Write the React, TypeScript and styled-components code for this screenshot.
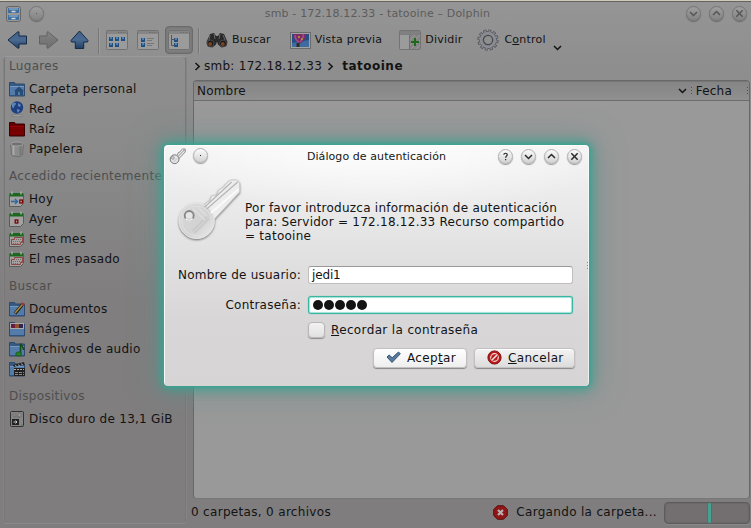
import React from "react";
import styled, { createGlobalStyle, css } from "styled-components";

const GlobalStyle = createGlobalStyle`
  html, body { margin: 0; padding: 0; overflow: hidden; }
  svg { display: block; flex: none; }
`;

const Window = styled.div`
  position: relative;
  box-sizing: border-box;
  width: 751px;
  height: 528px;
  display: flex;
  flex-direction: column;
  overflow: hidden;
  border-top: 1px solid #cdcaba;
  background: linear-gradient(#959595 0, #8e8e8e 70px, #8b8b8b 140px, #807e7f 300px, #7f7d7e 100%);
  box-shadow: inset 0 1px 0 #646464;
  font-family: "DejaVu Sans", sans-serif;
  font-size: 12px;
  letter-spacing: 0.23px;
  color: #131313;
  white-space: nowrap;
`;

const TitleBar = styled.header`
  display: flex;
  align-items: center;
  height: 25px;
  padding: 0 4px 0 6px;
  font-size: 11px;
`;

const WindowTitle = styled.span<{ $dim?: boolean }>`
  flex: 1;
  padding-left: ${(p) => (p.$dim ? 25 : 47)}px;
  text-align: center;
  color: ${(p) => (p.$dim ? "#5c5c5c" : "#161616")};
  letter-spacing: ${(p) => (p.$dim ? "0.16px" : "0.08px")};
`;

const TitleButtons = styled.div<{ $gap: number }>`
  display: flex;
  gap: ${(p) => p.$gap}px;
`;

const RoundButton = styled.button<{ $dim?: boolean }>`
  box-sizing: border-box;
  display: grid;
  place-items: center;
  width: 15px;
  height: 15px;
  padding: 0;
  border-radius: 50%;
  border: 1px solid ${(p) => (p.$dim ? "#757575" : "#b0b0b0")};
  color: ${(p) => (p.$dim ? "#555" : "#2b2b2b")};
  background: ${(p) => (p.$dim ? "linear-gradient(#9e9e9e, #848484)" : "linear-gradient(#fbfbfb, #d2d2d2)")};
  box-shadow: 0 1px 1px ${(p) => (p.$dim ? "#686868" : "#999")};
`;

const ToolBar = styled.nav`
  display: flex;
  align-items: center;
  height: 29px;
  padding-left: 7px;
  font-size: 11px;
  letter-spacing: 0.21px;
`;

const Tool = styled.div<{ $before?: number; $gap?: number }>`
  display: flex;
  align-items: center;
  gap: ${(p) => p.$gap ?? 4}px;
  margin-left: ${(p) => p.$before ?? 0}px;
  margin-top: -1px;
`;

const ToolLabel = styled.span`
  padding-bottom: 1px;
`;

const MenuArrow = styled.span`
  align-self: flex-end;
  margin: 0 0 3px 7px;
`;

const PressedTool = styled.div`
  box-sizing: border-box;
  display: grid;
  place-items: center;
  width: 28px;
  height: 28px;
  margin: -2px 0 0 6px;
  border: 1px solid #6b6b6b;
  border-radius: 4px;
  background: #7f7f7f;
  box-shadow: inset 0 0 2px #666;
`;

const Separator = styled.i<{ $before: number }>`
  width: 1px;
  height: 26px;
  margin-left: ${(p) => p.$before}px;
  background: #777;
  box-shadow: 1px 0 #9c9c9c;
`;

const Body = styled.div`
  display: flex;
  flex: 1;
  min-height: 0;
`;

const Sidebar = styled.aside`
  box-sizing: border-box;
  width: 184px;
  height: 468px;
  margin: 1px 0 0 3px;
  padding-left: 5px;
  border: 1px solid #858585;
  border-color: #9a9a9a #858383 #8b8989 #858383;
  border-radius: 4px;
  box-shadow: inset 1px 0 #777, inset -1px 0 #797979;
`;

const PlaceHeading = styled.h2<{ $first?: boolean }>`
  box-sizing: border-box;
  height: ${(p) => (p.$first ? 22 : 30)}px;
  margin: 0;
  padding-top: ${(p) => (p.$first ? 0 : 4)}px;
  line-height: ${(p) => (p.$first ? 18 : 26)}px;
  font-size: 12px;
  font-weight: normal;
  letter-spacing: 0.32px;
  color: #4e4e4e;
`;

const Place = styled.div`
  display: flex;
  align-items: center;
  gap: 4px;
  height: 20px;
  letter-spacing: 0.27px;
`;

const Main = styled.main`
  display: flex;
  flex-direction: column;
  width: 557px;
  margin-left: 6px;
`;

const Breadcrumb = styled.div`
  display: flex;
  align-items: center;
  height: 22px;
  padding-bottom: 2px;
  gap: 4px;
  letter-spacing: 0.27px;
`;

const Crumb = styled.span<{ $current?: boolean }>`
  margin-left: ${(p) => (p.$current ? 3 : -2)}px;
  font-weight: ${(p) => (p.$current ? "bold" : "normal")};
  ${(p) => p.$current && css`letter-spacing: 0.5px;`}
`;

const ListView = styled.section`
  box-sizing: border-box;
  width: 557px;
  height: 419px;
  margin-top: 1px;
  border: 1px solid #686868;
  border-bottom-color: #777;
  border-radius: 4px;
  background: #999;
  overflow: hidden;
`;

const ColumnHeader = styled.div`
  box-sizing: border-box;
  display: flex;
  align-items: center;
  height: 20px;
  padding: 0 1px 0 3px;
  border-bottom: 1px solid #6d6d6d;
  background: linear-gradient(#858585, #8f8f8f);
  box-shadow: inset 0 1px #767676;
`;

const ColumnName = styled.span`
  flex: 1;
  letter-spacing: 0.2px;
`;

const Dots = styled.i<{ $before: number; $after?: number }>`
  width: 1px;
  height: 8px;
  margin: 0 ${(p) => p.$after ?? 0}px 0 ${(p) => p.$before}px;
  background: repeating-linear-gradient(#4e4e4e 0 1px, transparent 1px 3px);
`;

const StatusBar = styled.footer`
  display: flex;
  align-items: center;
  height: 27px;
`;

const StatusText = styled.span<{ $grow?: boolean }>`
  ${(p) => p.$grow && css`flex: 1;`}
  margin-left: ${(p) => (p.$grow ? -2 : 8)}px;
  padding-bottom: 2px;
  letter-spacing: 0.32px;
`;

const Progress = styled.div`
  box-sizing: border-box;
  display: grid;
  place-items: center;
  width: 86px;
  height: 22px;
  margin: 0 0 0 7px;
  padding-left: 5px;
  border: 1px solid #5d5b5b;
  border-radius: 4px;
  background: #736f70;
  box-shadow: 0 1px #8b8989, inset 0 0 2px #5c5a5a;
`;

const ProgressPill = styled.i`
  width: 3px;
  height: 20px;
  border: solid #357d71;
  border-width: 0 1px;
  border-radius: 2px;
  background: #45a394;
`;

const Dialog = styled.section`
  position: absolute;
  left: 164px;
  top: 144px;
  box-sizing: border-box;
  width: 425px;
  height: 241px;
  display: flex;
  flex-direction: column;
  border-radius: 4px;
  background:
    radial-gradient(ellipse 250px 70px at 50% 0, #fffffff0, #ffffff00),
    linear-gradient(#f3f3f3 0, #e8e8e8 70px, #d8d6d7 175px, #d6d4d5 100%);
  box-shadow: inset 1px 1px #ffffffd0, inset -1px 0 #ffffffa0,
    0 0 3px 1px #38a594, 0 0 11px 3px #3ba292, 0 0 28px 6px #5c8f8788;
`;

const DialogTitleBar = styled(TitleBar)`
  height: 23px;
  padding: 0 7px 0 5px;
`;

const Message = styled.div`
  display: flex;
  height: 86px;
  padding: 0 0 0 13px;
`;

const KeyPicture = styled.div`
  width: 65px;
  padding-top: 11px;
`;

const MessageText = styled.p`
  margin: 33px 0 0 3px;
  line-height: 14px;
  letter-spacing: 0.25px;
`;

const Form = styled.div`
  display: grid;
  grid-template-columns: 137px 265px;
  column-gap: 7px;
  grid-template-rows: 20px 20px;
  row-gap: 10px;
  align-items: center;
  margin-top: 11px;
`;

const FieldLabel = styled.label`
  text-align: right;
  line-height: 18px;
`;

const Field = styled.div<{ $focused?: boolean }>`
  box-sizing: border-box;
  display: flex;
  align-items: center;
  gap: 1px;
  height: 18px;
  padding-left: 3px;
  letter-spacing: -0.15px;
  border: 1px solid #c0bebf;
  border-top-color: #9a9899;
  border-radius: 3px;
  background: #fff;
  ${(p) => p.$focused && css`
    border: 1px solid #39b5a2;
    padding-left: 4px;
    box-shadow: inset 0 0 1px 1px #9fe0d6, 0 0 1px #39b5a2;
  `}
`;

const Bullet = styled.i`
  width: 10px;
  height: 10px;
  border-radius: 50%;
  background: #131313;
`;

const RememberRow = styled.div`
  display: flex;
  align-items: center;
  gap: 6px;
  height: 20px;
  margin: 5px 0 0 144px;
  letter-spacing: 0.36px;
`;

const CheckBox = styled.i`
  box-sizing: border-box;
  width: 17px;
  height: 16px;
  border: 1px solid #b9b7b8;
  border-radius: 4px;
  background: linear-gradient(#f2f2f2, #e2e1e1);
  box-shadow: 0 1px 1px #8d8b8c;
`;

const ButtonRow = styled.div`
  display: flex;
  justify-content: flex-end;
  gap: 7px;
  margin-top: 8px;
  padding-right: 14px;
`;

const PushButton = styled.button<{ $width: number; $primary?: boolean }>`
  box-sizing: border-box;
  display: flex;
  align-items: center;
  gap: 6px;
  width: ${(p) => p.$width}px;
  height: 20px;
  padding: 0 0 1px ${(p) => (p.$primary ? 12 : 12)}px;
  border: 1px solid #c2c0c1;
  border-radius: 4px;
  background: ${(p) => (p.$primary ? "linear-gradient(#fff, #eee)" : "linear-gradient(#f3f3f3, #dddcdc)")};
  box-shadow: 0 1px 1px #878586, inset 0 1px #fff;
  font: inherit;
  letter-spacing: 0.33px;
  color: #131313;
`;

const Glyph = ({ kind }: { kind: "down" | "up" | "close" | "right" | "dot" | "help" }) => {
  const paths = {
    down: "M1 3l3.5 3.5L8 3",
    up: "M1 6l3.5-3.5L8 6",
    close: "M1.3 1.3l6.4 6.4M7.7 1.3L1.3 7.7",
    right: "M2.5 1l3.7 3.5L2.5 8",
    dot: "M4 4.5h1",
    help: "M2.8 2.8C3 .6 6.4.8 6.2 2.9 6.1 4.1 4.6 4.2 4.6 5.8M4.6 7v1.2",
  };
  return (
    <svg width={9} height={9} viewBox="0 0 9 9" fill="none" stroke="currentColor">
      <path d={paths[kind]} strokeWidth={kind === "dot" ? 1 : kind === "help" ? 1.2 : 1.5} />
    </svg>
  );
};

const Cabinet = () => (
  <svg width="15" height="16" viewBox="0 0 15 16">
    <rect x=".5" y=".5" width="14" height="15" rx="2" fill="#989898" stroke="#666" />
    <rect x="2" y="2" width="11" height="5" fill="#3f6f9f" />
    <rect x="2" y="9" width="11" height="5" fill="#3f6f9f" />
    <path d="M3 3h9M3 10h9" stroke="#a4bdd0" />
    <path d="M5.5 5.5h4M5.5 12.5h4" stroke="#d1d7da" strokeWidth="1.5" />
  </svg>
);

const Arrow = ({ dir, gray }: { dir: "left" | "right" | "up"; gray?: boolean }) => {
  const shapes = {
    left: "M1 10L11 1.7l1 .4V6h7.5v8H12v3.9l-1 .4z",
    right: "M20 10L10 1.7l-1 .4V6H1.5v8H9v3.9l1 .4z",
    up: "M10.5 1L19 10.5l-.5 1.5h-3.8v6.5H6.3V12H2.5L2 10.5z",
  };
  const id = `arrow-${dir}`;
  return (
    <svg width="21" height="20" viewBox="0 0 21 20">
      <defs>
        <linearGradient id={id} x1="0" x2="0" y1="0" y2="1">
          <stop stopColor={gray ? "#858585" : "#3f5f87"} />
          <stop offset=".5" stopColor={gray ? "#787878" : "#4a6a92"} />
          <stop offset="1" stopColor={gray ? "#6f6f6f" : "#213f65"} />
        </linearGradient>
      </defs>
      <path d={shapes[dir]} fill={`url(#${id})`} stroke={gray ? "#626262" : "#172943"} strokeLinejoin="round" />
    </svg>
  );
};

const ViewIcon = ({ kind }: { kind: "icons" | "details" | "tree" }) => {
  const squares = {
    icons: [[4, 7], [10, 7], [16, 7], [4, 13], [10, 13]],
    details: [[5, 8], [5, 13]],
    tree: [[7, 8], [7, 13]],
  }[kind];
  return (
    <svg width="22" height="20" viewBox="0 0 22 20">
      <rect x=".5" y=".5" width="21" height="19" rx="1" fill="#9b9b9b" stroke="#717171" />
      <path d="M1 2.5h20" stroke="#858585" strokeWidth="3" />
      <path d="M12 2.5h8" stroke="#6f6f6f" strokeDasharray="1.5 1" />
      {squares.map(([x, y]) => (
        <g key={`${x}-${y}`}>
          <rect x={x - 1} y={y} width="4" height="4" fill="#204f80" />
          <rect x={x} y={y} width="2" height="2" fill="#4b83b8" />
        </g>
      ))}
      {kind === "details" && <path d="M10 8.5h7M10 10.5h5M10 13.5h7M10 15.5h5" stroke="#777" />}
      {kind === "tree" && <path d="M3.5 5v10.5h3M3.5 9.5h3" stroke="#555" fill="none" />}
    </svg>
  );
};

const Binoculars = () => (
  <svg width="22" height="16" viewBox="0 0 22 16">
    <path d="M4 2l4-1 2 3h2l2-3 4 1 3.5 8-1 4-5 1.5-3.5-3-1-3-1 3-3.5 3-5-1.5-1-4z" fill="#292929" />
    <path d="M4 3l-1 5M8 2l1 5M14 2l-1 5M17 3l2 5" stroke="#666" fill="none" />
    <circle cx="4.5" cy="11.5" r="3.4" fill="#171717" stroke="#4b4b4b" />
    <circle cx="17" cy="11.5" r="3.4" fill="#171717" stroke="#4b4b4b" />
    <circle cx="4.2" cy="12" r="2" fill="#7a4222" />
    <circle cx="16.8" cy="12" r="2" fill="#7a4222" />
  </svg>
);

const Preview = () => (
  <svg width="21" height="17" viewBox="0 0 21 17">
    <rect x=".5" y=".5" width="20" height="16" fill="#a3a3a3" stroke="#6b6b6b" />
    <rect x="2" y="2" width="17" height="13" fill="#244d88" />
    <path d="M2 11l17-3v7H2z" fill="#3c6ca0" />
    <path d="M4 2h12c1 4-2 7-6 9.5C6 10 3 6 4 2z" fill="#7c2b67" />
    <path d="M5 3c0 3 2 6 4 7M13 2c1 3-1 6-3 8" stroke="#a04f80" strokeWidth="1.5" fill="none" />
    <path d="M8 4h2v2H8zM11 6h2v2h-2z" fill="#a9853c" />
    <path d="M6.5 11h3v4h-3z" fill="#302b25" />
  </svg>
);

const Split = () => (
  <svg width="22" height="20" viewBox="0 0 22 20">
    <rect x=".5" y=".5" width="21" height="19" rx="1" fill="#9b9b9b" stroke="#747474" />
    <path d="M1 3h20" stroke="#7e7e7e" strokeWidth="4" />
    <path d="M2 3h18" stroke="#888" strokeDasharray="1 1" />
    <rect x="11" y="5" width="10" height="14" fill="#858585" />
    <path d="M11 10l5-5M11 15L21 5M12 19l9-9M17 19l4-4" stroke="#999" />
    <path d="M10.5 5v14" stroke="#6f6f6f" />
    <path d="M16 8v8M12 12h8" stroke="#1f691b" strokeWidth="2" />
  </svg>
);

const Gear = () => (
  <svg width="22" height="22" viewBox="0 0 22 22">
    <circle cx="11" cy="11" r="9.2" fill="none" stroke="#4b4c52" strokeWidth="2.8" strokeDasharray="2.9 1.917" />
    <circle cx="11" cy="11" r="7.2" fill="#8f8f8f" stroke="#55565d" strokeWidth="3.6" />
    <circle cx="11" cy="11" r="9" fill="none" stroke="#85868c" strokeWidth="2" strokeDasharray="1.8 2.912" strokeDashoffset="-.5" />
    <circle cx="11" cy="11" r="6.8" fill="none" stroke="#8b8c92" strokeWidth="3" />
    <circle cx="11" cy="11" r="4.6" fill="#8f8f8f" stroke="#484950" strokeWidth="1.2" />
  </svg>
);

const FolderBase = ({ red }: { red?: boolean }) => (
  <>
    <path d="M.5 1.5h5l1 1.5h9v12H.5z" fill={red ? "#650000" : "#365a84"} stroke={red ? "#3b0000" : "#2f4a6d"} />
    <path d="M1 6h14v8H1z" fill={red ? "#790000" : "#547caa"} />
    <path d="M1 5.5h14" stroke={red ? "#980505" : "#7599bd"} />
  </>
);

type PlaceKind = "home" | "net" | "root" | "trash" | "today" | "day" | "month" | "docs" | "pics" | "audio" | "video" | "disk";

const PlaceIcon = ({ kind }: { kind: PlaceKind }) => (
  <svg width="16" height="16" viewBox="0 0 16 16">
    {["home", "docs", "pics", "audio", "video"].includes(kind) && <FolderBase />}
    {kind === "home" && <path d="M5 10l5-4.5L15 10h-1v4h-3v-3H9v3H6v-4z" fill="#284c76" />}
    {kind === "root" && <FolderBase red />}
    {kind === "docs" && (
      <>
        <path d="M6 12.5L14 3" stroke="#242018" strokeWidth="3.4" />
        <path d="M6 12L13.5 3.5" stroke="#a88b32" strokeWidth="1.6" />
        <path d="M13 4l1.7-2" stroke="#a33d35" strokeWidth="3" />
      </>
    )}
    {kind === "pics" && (
      <>
        <path d="M1 2h14v6H1z" fill="#aaa" />
        <path d="M2 3h4v4H2z" fill="#6c1942" />
        <path d="M6 3h4v4H6z" fill="#8a532c" />
        <path d="M10 3h4v4h-4z" fill="#332451" />
      </>
    )}
    {kind === "audio" && (
      <>
        <path d="M11.5 13V2.5c1 3 3 2.5 3 6.5" stroke="#164d18" fill="none" strokeWidth="1.6" />
        <ellipse cx="9.6" cy="13" rx="2.9" ry="2.1" fill="#258225" stroke="#164d18" strokeWidth=".7" />
      </>
    )}
    {kind === "video" && (
      <>
        <path d="M5 7h11v8H5z" fill="#202020" />
        <path d="M4 4l11-3 .5 2.5L5 6z" fill="#252525" />
        <path d="M6 4.5l2 1M9 3.7l2 1M12 2.8l2 1M5 8.5h10" stroke="#aaa" strokeDasharray="2 1" />
        <path d="M6 11.5h9M6 13.5h9" stroke="#888" strokeDasharray="3 1" />
      </>
    )}
    {kind === "net" && (
      <>
        <ellipse cx="8" cy="14.7" rx="6" ry="1" fill="#a5a5a5" stroke="#666" strokeWidth=".5" />
        <circle cx="8" cy="6.5" r="6.2" fill="#203f80" />
        <path d="M3 3c2-2 4-1 4 0s-2 1-2 3-2 1-2-1zM9 2l3 2-1 2-2-1zM8 8l3 1-2 3-1-2z" fill="#5b88b8" />
      </>
    )}
    {kind === "trash" && (
      <>
        <path d="M1.5 3l1 11c1 2 10 2 11 0l1-11z" fill="#8b8b8b" stroke="#707070" />
        <path d="M4.5 5v9" stroke="#a8a8a8" strokeWidth="2" />
        <path d="M11.5 5v9" stroke="#777" strokeWidth="2" />
        <ellipse cx="8" cy="3" rx="6.2" ry="2" fill="#707070" stroke="#a2a2a2" />
      </>
    )}
    {(kind === "today" || kind === "day" || kind === "month") && (
      <>
        <path d="M.5 3h14v9.5l-3 3H.5z" fill="#a1a1a1" stroke="#5b5b5b" />
        <path d="M1 2h13v3.5H1z" fill="#1e6720" />
        <path d="M3 .5v3M12 .5v3" stroke="#a9b3a9" strokeWidth="1.4" />
      </>
    )}
    {kind === "today" && (
      <>
        <path d="M2 10.5h6M6 8l2.5 2.5L6 13" stroke="#2b66a4" fill="none" strokeWidth="1.3" />
        <rect x="10.8" y="9" width="2.6" height="3" fill="#aaa" stroke="#760000" strokeWidth="1.2" />
      </>
    )}
    {kind === "day" && <rect x="6.2" y="9" width="2.6" height="3" fill="#aaa" stroke="#760000" strokeWidth="1.3" />}
    {kind === "month" && (
      <>
        <path d="M5.5 6.5h8v5h-2v2h-9v-5h3z" fill="#a4a0a0" stroke="#8e3c3c" strokeWidth=".9" />
        <path d="M7 8.5h6M4 10.5h9M4 12.5h6" stroke="#776b6b" strokeDasharray="1 1" />
      </>
    )}
    {kind === "disk" && (
      <>
        <rect x="1.5" y=".5" width="13" height="15" rx="1" fill="#858585" stroke="#333" />
        <path d="M4 3h3v2H4zM9 2h3v4H9zM4 6h7" fill="#999" stroke="#6c6c6c" strokeWidth=".8" />
        <rect x="3" y="8" width="7" height="6" fill="#222" />
        <path d="M4.5 11h3M6.5 9.5L8 11l-1.5 1.5" stroke="#ccc" fill="none" />
        <path d="M12 14h1.5" stroke="#248524" />
      </>
    )}
  </svg>
);

const SmallKey = () => (
  <svg width="17" height="17" viewBox="0 0 17 17">
    <path d="M7.2 7.8l1.6-1.6.3-1.4 1.7-.7 1-1.5L13.6 1h2.6v3l-6.7 7z" fill="#ededed" stroke="#808080" strokeWidth=".9" />
    <path d="M9 8.5L15.3 2" stroke="#777" strokeWidth=".8" />
    <circle cx="5.6" cy="11.2" r="4.4" fill="#e4e4e4" stroke="#777" />
    <circle cx="3.9" cy="9.9" r="1.3" fill="#fafafa" stroke="#777" strokeWidth=".8" />
    <path d="M5 13.5l3-3" stroke="#bbb" />
  </svg>
);

const Key = () => (
  <svg width="65" height="66" viewBox="-.7 0 65 66">
    <defs>
      <linearGradient id="key-bow" x1="0" y1="0" x2="1" y2="1">
        <stop stopColor="#d9d9d9" />
        <stop offset=".6" stopColor="#d2d2d2" />
        <stop offset="1" stopColor="#efefef" />
      </linearGradient>
      <filter id="key-shade" x="-10%" y="-10%" width="125%" height="125%">
        <feDropShadow dx="0" dy="1" stdDeviation="1" floodColor="#444" floodOpacity=".75" />
      </filter>
    </defs>
    <g filter="url(#key-shade)">
      <path d="M26 28l2-4 4-2 2-5 5-1 2-5 5-3 3-4 4-3h6l3 3v9L33 44z" fill="#ededed" stroke="#bbb" strokeWidth=".6" />
      <circle cx="19" cy="42" r="17.5" fill="url(#key-bow)" stroke="#e8e8e8" />
    </g>
    <path d="M27 28L54 3M29 30L60 3" stroke="#b4b4b4" strokeWidth="1.1" />
    <path d="M33 34L61 10" stroke="#fafafa" strokeWidth="2" />
    <circle cx="19" cy="42" r="15" fill="none" stroke="#e2e2e2" strokeWidth="1" />
    <path d="M15 52l14-14M17 54l14-14" stroke="#c8c8c8" strokeWidth="1.6" />
    <path d="M15 29l12 12M19 27l10 10" stroke="#dedede" strokeWidth="1.5" />
    <circle cx="11.5" cy="36.5" r="4.5" fill="#e5e5e5" stroke="#858585" strokeWidth="1.8" />
    <path d="M8 39.5a4.5 4.5 0 0 0 7 0" fill="none" stroke="#f4f4f4" strokeWidth="1.5" />
  </svg>
);

const CheckIcon = () => (
  <svg width="15" height="13" viewBox="0 0 15 13">
    <path d="M1 6l2.2-2 3 2.8L12.5 1l1.8 1.8L6 11.5z" fill="#5a7ba0" stroke="#34506f" />
  </svg>
);

const CancelIcon = () => (
  <svg width="15" height="15" viewBox="0 0 15 15">
    <circle cx="7.5" cy="7.5" r="6.6" fill="#bd1818" stroke="#831212" />
    <circle cx="7.5" cy="7.5" r="3.8" fill="#c01f1f" stroke="#f0dede" strokeWidth="1.2" />
    <path d="M4.8 10.2l5.4-5.4" stroke="#b01515" strokeWidth="3.2" />
    <path d="M4.8 10.2l5.4-5.4" stroke="#f2e6e6" strokeWidth="1.6" />
  </svg>
);

const StopIcon = () => (
  <svg width="15" height="15" viewBox="0 0 15 15">
    <path d="M4.5.7h6l3.8 3.8v6l-3.8 3.8h-6L.7 10.5v-6z" fill="#8d1616" stroke="#5e1010" />
    <path d="M5 5l5 5M10 5l-5 5" stroke="#b9b1b1" strokeWidth="2.2" />
  </svg>
);

const groups: { title: string; places: [PlaceKind, string][] }[] = [
  { title: "Lugares", places: [["home", "Carpeta personal"], ["net", "Red"], ["root", "Raíz"], ["trash", "Papelera"]] },
  { title: "Accedido recientemente", places: [["today", "Hoy"], ["day", "Ayer"], ["month", "Este mes"], ["month", "El mes pasado"]] },
  { title: "Buscar", places: [["docs", "Documentos"], ["pics", "Imágenes"], ["audio", "Archivos de audio"], ["video", "Vídeos"]] },
  { title: "Dispositivos", places: [["disk", "Disco duro de 13,1 GiB"]] },
];

const ResizeGrip = styled.i`
  position: absolute;
  right: 1px;
  top: 117px;
  width: 1px;
  height: 7px;
  background: repeating-linear-gradient(#888 0 1px, transparent 1px 3px);
`;

const AuthDialog = () => (
  <Dialog role="dialog">
    <DialogTitleBar as="div">
      <TitleButtons $gap={7}>
        <SmallKey />
        <RoundButton><Glyph kind="dot" /></RoundButton>
      </TitleButtons>
      <WindowTitle>Diálogo de autenticación</WindowTitle>
      <TitleButtons $gap={8}>
        <RoundButton><Glyph kind="help" /></RoundButton>
        <RoundButton><Glyph kind="down" /></RoundButton>
        <RoundButton><Glyph kind="up" /></RoundButton>
        <RoundButton><Glyph kind="close" /></RoundButton>
      </TitleButtons>
    </DialogTitleBar>
    <Message>
      <KeyPicture><Key /></KeyPicture>
      <MessageText>
        Por favor introduzca información de autenticación<br />
        para: Servidor = 172.18.12.33 Recurso compartido<br />
        = tatooine
      </MessageText>
    </Message>
    <Form>
      <FieldLabel>Nombre de usuario:</FieldLabel>
      <Field>jedi1</Field>
      <FieldLabel>Contraseña:</FieldLabel>
      <Field $focused>{[0, 1, 2, 3, 4].map((n) => <Bullet key={n} />)}</Field>
    </Form>
    <RememberRow><CheckBox /><span><u>R</u>ecordar la contraseña</span></RememberRow>
    <ButtonRow>
      <PushButton $width={94} $primary><CheckIcon /><span>Acep<u>t</u>ar</span></PushButton>
      <PushButton $width={101}><CancelIcon /><span><u>C</u>ancelar</span></PushButton>
    </ButtonRow>
    <ResizeGrip />
  </Dialog>
);

export default function App() {
  return (
    <Window>
      <GlobalStyle />
      <TitleBar>
        <TitleButtons $gap={8}>
          <Cabinet />
          <RoundButton $dim><Glyph kind="dot" /></RoundButton>
        </TitleButtons>
        <WindowTitle $dim>smb - 172.18.12.33 - tatooine – Dolphin</WindowTitle>
        <TitleButtons $gap={8}>
          <RoundButton $dim><Glyph kind="down" /></RoundButton>
          <RoundButton $dim><Glyph kind="up" /></RoundButton>
          <RoundButton $dim><Glyph kind="close" /></RoundButton>
        </TitleButtons>
      </TitleBar>
      <ToolBar>
        <Tool><Arrow dir="left" /></Tool>
        <Tool $before={10}><Arrow dir="right" gray /></Tool>
        <Tool $before={10}><Arrow dir="up" /></Tool>
        <Separator $before={8} />
        <Tool $before={7}><ViewIcon kind="icons" /></Tool>
        <Tool $before={9}><ViewIcon kind="details" /></Tool>
        <PressedTool><ViewIcon kind="tree" /></PressedTool>
        <Separator $before={5} />
        <Tool $before={7}><Binoculars /><ToolLabel>Buscar</ToolLabel></Tool>
        <Tool $before={19}><Preview /><ToolLabel>Vista previa</ToolLabel></Tool>
        <Tool $before={17}><Split /><ToolLabel>Dividir</ToolLabel></Tool>
        <Tool $before={15} $gap={5}><Gear /><ToolLabel>C<u>o</u>ntrol</ToolLabel></Tool>
        <MenuArrow><Glyph kind="down" /></MenuArrow>
      </ToolBar>
      <Body>
        <Sidebar>
          {groups.map((group, i) => (
            <React.Fragment key={group.title}>
              <PlaceHeading $first={i === 0}>{group.title}</PlaceHeading>
              {group.places.map(([kind, name]) => (
                <Place key={name}><PlaceIcon kind={kind} /><span>{name}</span></Place>
              ))}
            </React.Fragment>
          ))}
        </Sidebar>
        <Main>
          <Breadcrumb>
            <Glyph kind="right" /><Crumb>smb: 172.18.12.33</Crumb>
            <Glyph kind="right" /><Crumb $current>tatooine</Crumb>
          </Breadcrumb>
          <ListView>
            <ColumnHeader>
              <ColumnName>Nombre</ColumnName>
              <Glyph kind="down" />
              <Dots $before={4} $after={4} />
              <span>Fecha</span>
              <Dots $before={15} />
            </ColumnHeader>
          </ListView>
          <StatusBar>
            <StatusText $grow>0 carpetas, 0 archivos</StatusText>
            <StopIcon />
            <StatusText>Cargando la carpeta...</StatusText>
            <Progress><ProgressPill /></Progress>
          </StatusBar>
        </Main>
      </Body>
      <AuthDialog />
    </Window>
  );
}
